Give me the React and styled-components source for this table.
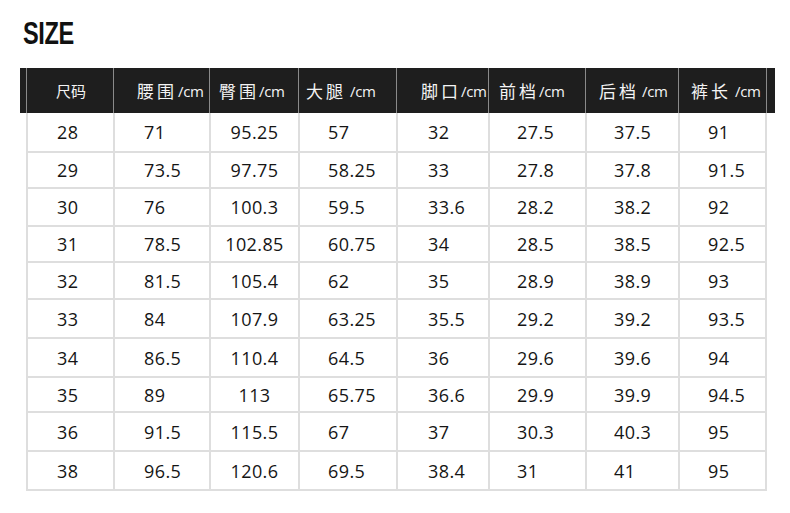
import styled, { createGlobalStyle } from 'styled-components'

const Global = createGlobalStyle`
    body {
        margin: 0;
        background: #fff;
    }
`

const columns = [
    { han: '尺码', unit: '', width: 87, head: 29, small: true, cell: 'left', pad: 29 },
    { han: '腰围', unit: '/cm', width: 96, head: 23, gap: 1, cell: 'left', pad: 29 },
    { han: '臀围', unit: '/cm', width: 89, head: 9, gap: 0, cell: 'center', pad: 0 },
    { han: '大腿', unit: '/cm', width: 98, head: 7, gap: 4, cell: 'left', pad: 28 },
    { han: '脚口', unit: '/cm', width: 92, head: 24, gap: 0, cell: 'left', pad: 30 },
    { han: '前档', unit: '/cm', width: 97, head: 10, gap: 0, cell: 'left', pad: 27 },
    { han: '后档', unit: '/cm', width: 93, head: 13, gap: 3, cell: 'left', pad: 27 },
    { han: '裤长', unit: '/cm', width: 89, head: 12, gap: 4, cell: 'left', pad: 28 },
]

const rows = [
    { h: 40, v: ['28', '71', '95.25', '57', '32', '27.5', '37.5', '91'] },
    { h: 36, v: ['29', '73.5', '97.75', '58.25', '33', '27.8', '37.8', '91.5'] },
    { h: 38, v: ['30', '76', '100.3', '59.5', '33.6', '28.2', '38.2', '92'] },
    { h: 36, v: ['31', '78.5', '102.85', '60.75', '34', '28.5', '38.5', '92.5'] },
    { h: 37, v: ['32', '81.5', '105.4', '62', '35', '28.9', '38.9', '93'] },
    { h: 39, v: ['33', '84', '107.9', '63.25', '35.5', '29.2', '39.2', '93.5'] },
    { h: 39, v: ['34', '86.5', '110.4', '64.5', '36', '29.6', '39.6', '94'] },
    { h: 35, v: ['35', '89', '113', '65.75', '36.6', '29.9', '39.9', '94.5'] },
    { h: 39, v: ['36', '91.5', '115.5', '67', '37', '30.3', '40.3', '95'] },
    { h: 39, v: ['38', '96.5', '120.6', '69.5', '38.4', '31', '41', '95'] },
]

const template = columns.map(c => `${c.width}px`).join(' ')

const Page = styled.div`
    width: 790px;
    height: 513px;
    padding: 18px 0 0 20px;
    box-sizing: border-box;
    overflow: hidden;
`

const Title = styled.h1`
    display: inline-block;
    margin: 0 0 18px 3px;
    font-family: "Liberation Sans", sans-serif;
    font-weight: 700;
    font-size: 31px;
    line-height: 32px;
    letter-spacing: -0.5px;
    color: #111;
    transform: scaleX(0.76);
    transform-origin: left center;
`

const Head = styled.div`
    display: grid;
    grid-template-columns: ${template};
    width: 755px;
    height: 45px;
    padding-left: 6px;
    box-sizing: border-box;
    background: #1e1e1e;
`

const HeadCell = styled.div`
    display: flex;
    align-items: center;
    padding-left: ${p => p.$pad}px;
    border-left: 1px solid #8a8a8a;
    color: #f4f4f4;
    white-space: nowrap;

    &:last-child {
        border-right: 1px solid #8a8a8a;
    }
`

const Han = styled.span`
    font-family: "Noto Sans CJK SC", sans-serif;
    font-size: ${p => p.$small ? 15 : 17}px;
    letter-spacing: ${p => p.$small ? 0 : 3}px;
    margin-top: -1px;
`

const Unit = styled.span`
    font-family: "Open Sans", sans-serif;
    font-size: 15px;
    letter-spacing: -0.3px;
    margin-left: ${p => p.$gap}px;
`

const Body = styled.div`
    margin-left: 6px;
    width: 741px;
`

const Row = styled.div`
    display: grid;
    grid-template-columns: ${template};
    height: ${p => p.$h}px;
`

const Cell = styled.div`
    display: flex;
    align-items: center;
    justify-content: ${p => p.$align === 'center' ? 'center' : 'flex-start'};
    padding-left: ${p => p.$pad}px;
    border-left: 2px solid #dedede;
    border-bottom: 2px solid #dedede;
    font-family: "Open Sans", sans-serif;
    font-size: 18px;
    letter-spacing: 0.4px;
    color: #151515;

    &:last-child {
        border-right: 2px solid #dedede;
    }
`

export default function App() {
    return (
        <Page>
            <Global />
            <Title>SIZE</Title>
            <Head>
                {columns.map(c => (
                    <HeadCell key={c.han} $pad={c.head}>
                        <Han $small={c.small}>{c.han}</Han>
                        {c.unit && <Unit $gap={c.gap}>{c.unit}</Unit>}
                    </HeadCell>
                ))}
            </Head>
            <Body>
                {rows.map(r => (
                    <Row key={r.v[0]} $h={r.h}>
                        {r.v.map((val, i) => (
                            <Cell key={i} $align={columns[i].cell} $pad={columns[i].pad}>
                                {val}
                            </Cell>
                        ))}
                    </Row>
                ))}
            </Body>
        </Page>
    )
}
